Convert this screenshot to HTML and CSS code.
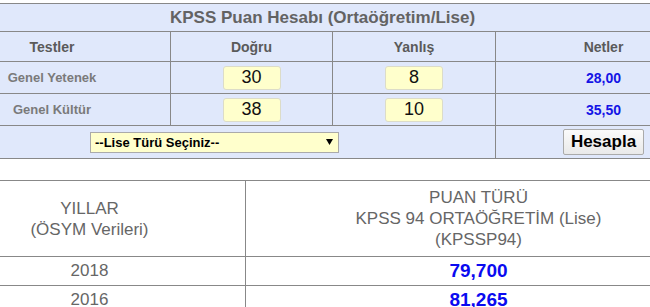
FILE: index.html
```html
<!DOCTYPE html>
<html lang="tr">
<head>
<meta charset="UTF-8">
<title>KPSS Puan Hesabı (Ortaöğretim/Lise)</title>
<link rel="stylesheet" href="styles.css">
</head>
<body>
<div class="page">
<table class="calc">
<colgroup><col class="c1"><col class="c2"><col class="c3"><col class="c4"></colgroup>
<tr><td colspan="4" class="title">KPSS Puan Hesabı (Ortaöğretim/Lise)</td></tr>
<tr class="head"><th>Testler</th><th>Doğru</th><th>Yanlış</th><th>Netler</th></tr>
<tr class="test"><td class="label">Genel Yetenek</td><td><input class="num" type="text" value="30"></td><td><input class="num" type="text" value="8"></td><td class="net">28,00</td></tr>
<tr class="test"><td class="label">Genel Kültür</td><td><input class="num" type="text" value="38"></td><td><input class="num" type="text" value="10"></td><td class="net">35,50</td></tr>
<tr class="foot">
<td colspan="3"><div class="select"><span>--Lise Türü Seçiniz--</span><svg width="7" height="6" viewBox="0 0 7 6"><path d="M0 0H7L3.5 6Z" fill="#000"/></svg></div></td>
<td><button class="btn">Hesapla</button></td>
</tr>
</table>

<table class="years">
<colgroup><col class="y1"><col class="y2"></colgroup>
<tr class="yhead"><td>YILLAR<br>(ÖSYM Verileri)</td><td>PUAN TÜRÜ<br>KPSS 94 ORTAÖĞRETİM (Lise)<br>(KPSSP94)</td></tr>
<tr class="yrow"><td>2018</td><td class="score">79,700</td></tr>
<tr class="yrow"><td>2016</td><td class="score">81,265</td></tr>
</table>
</div>
</body>
</html>
```

FILE: styles.css
```css
html, body { overflow: hidden; }
body { margin: 0; background: #fff; font-family: "Liberation Sans", Arial, sans-serif; }
.page { width: 778px; margin-left: -67px; padding-top: 3px; }

table { width: 778px; border-collapse: collapse; table-layout: fixed; }
td, th { border: 1px solid #888; padding: 0; text-align: center; }

.calc { background: #e0e8fb; }
.calc .c1 { width: 237px; }
.calc .c2 { width: 162px; }
.calc .c3 { width: 163px; }
.calc .c4 { width: 216px; }
.title { height: 27px; font-size: 17px; font-weight: bold; color: #636363; }
.head th { height: 29px; font-size: 14px; color: #5a5a5a; }
.test td { height: 31px; }
.label { font-size: 13px; font-weight: bold; color: #7a7a7a; }
.net { font-size: 14px; font-weight: bold; color: #1414e6; }
.num { box-sizing: border-box; width: 58px; height: 24px; margin: 0; padding: 0; border: 1px solid #dcdcc8; border-radius: 3px; background: #ffffcc; font-family: inherit; font-size: 18px; text-align: center; color: #111; vertical-align: middle; }
.foot td { height: 32px; }
.select { box-sizing: border-box; width: 249px; height: 21px; margin: 0 auto; padding: 0 5px 0 4px; display: flex; align-items: center; justify-content: space-between; background: #ffffcc; border: 1px solid #aaa; font-size: 13px; font-weight: bold; color: #000; }
.btn { box-sizing: border-box; width: 81px; height: 26px; padding: 0; border: 1px solid #aaa; border-radius: 2px; background: linear-gradient(#fbfbfb, #e9e9e9); font-family: inherit; font-size: 17px; font-weight: bold; color: #000; vertical-align: middle; }

.years { margin-top: 21px; background: #fff; color: #666; font-size: 17px; }
.years .y1 { width: 312px; }
.years .y2 { width: 466px; }
.yhead td { height: 75px; line-height: 21px; }
.yrow td { height: 28px; }
.score { font-size: 19px; font-weight: bold; color: #0a0af0; }
```
